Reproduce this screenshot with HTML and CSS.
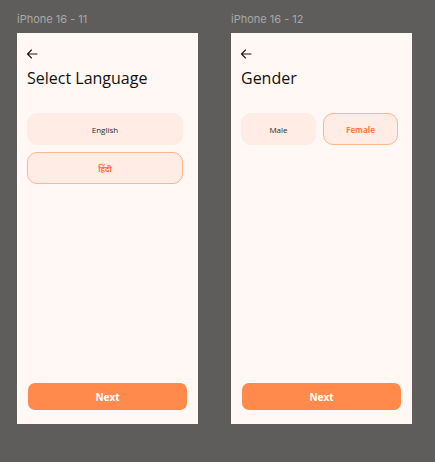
FILE: index.html
```html
<!DOCTYPE html>
<html lang="en">
<head>
<meta charset="utf-8">
<title>Onboarding frames</title>
<link rel="stylesheet" href="styles.css">
</head>
<body>
<div class="canvas">
  <section class="artboard">
    <div class="artboard-label">iPhone 16 - 11</div>
    <div class="screen">
      <svg class="back" width="12" height="10" viewBox="0 0 12 10" aria-hidden="true">
        <path d="M11 5H1.5M5.5 1L1.5 5L5.5 9" fill="none" stroke="#1a1a1a" stroke-width="1.1" stroke-linecap="round" stroke-linejoin="round"/>
      </svg>
      <h1 class="title">Select Language</h1>
      <div class="options-col">
        <button class="option">English</button>
        <button class="option option--active">हिंदी</button>
      </div>
      <button class="next">Next</button>
    </div>
  </section>
  <section class="artboard">
    <div class="artboard-label">iPhone 16 - 12</div>
    <div class="screen">
      <svg class="back" width="12" height="10" viewBox="0 0 12 10" aria-hidden="true">
        <path d="M11 5H1.5M5.5 1L1.5 5L5.5 9" fill="none" stroke="#1a1a1a" stroke-width="1.1" stroke-linecap="round" stroke-linejoin="round"/>
      </svg>
      <h1 class="title">Gender</h1>
      <div class="options-row">
        <button class="option">Male</button>
        <button class="option option--active">Female</button>
      </div>
      <button class="next">Next</button>
    </div>
  </section>
</div>
</body>
</html>
```

FILE: styles.css
```css
* { box-sizing: border-box; }
html, body {
  margin: 0;
  padding: 0;
  background: #5e5d5b;
  width: 435px;
  height: 462px;
  overflow: hidden;
}
body {
  font-family: "Open Sans", "Noto Sans", sans-serif;
}
.canvas {
  display: flex;
  gap: 33px;
  padding: 12px 0 0 17px;
}
.artboard {
  display: flex;
  flex-direction: column;
}
.artboard-label {
  font-family: Inter, "Noto Sans", sans-serif;
  font-size: 11px;
  line-height: 14px;
  color: #a9a9a7;
  margin-bottom: 7px;
}
.screen {
  width: 181px;
  height: 391px;
  background: #fff8f4;
  display: flex;
  flex-direction: column;
  padding: 16px 15px 14px 10px;
}
.back {
  display: block;
  margin-left: -1px;
}
.title {
  margin: 9px 0 0;
  font-size: 16px;
  line-height: 20px;
  font-weight: 400;
  color: #111;
}
.options-col {
  margin-top: 25px;
  display: flex;
  flex-direction: column;
  gap: 7px;
}
.options-row {
  margin-top: 25px;
  display: flex;
  gap: 7px;
  width: 157px;
}
.options-row .option { flex: 1; }
.option {
  height: 32px;
  border: 1px solid #ffece4;
  border-radius: 10px;
  background: #ffece4;
  font-family: "Open Sans", "Noto Sans", sans-serif;
  font-size: 8px;
  color: #2a2a2a;
  padding: 0;
  cursor: pointer;
}
.option--active {
  border-color: #ffb48c;
  color: #ff7a3c;
  font-weight: 700;
}
.next {
  margin-top: auto;
  margin-left: 1px;
  width: 159px;
  height: 27px;
  border: 0;
  border-radius: 7px;
  background: #ff8a4c;
  color: #fff;
  font-family: "Open Sans", sans-serif;
  font-weight: 700;
  font-size: 10px;
  padding: 0;
  cursor: pointer;
}
```
